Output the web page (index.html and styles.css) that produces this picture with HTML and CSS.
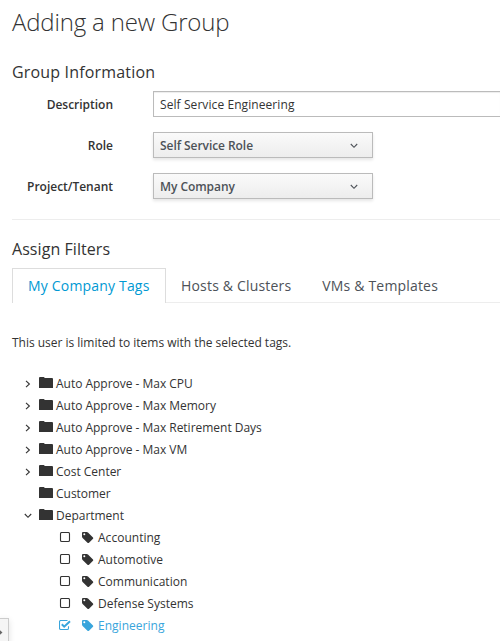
FILE: index.html
```html
<!DOCTYPE html>
<html lang="en">
<head>
<meta charset="utf-8">
<title>Adding a new Group</title>
<link rel="stylesheet" href="styles.css">
</head>
<body>
<svg class="defs" width="0" height="0" aria-hidden="true">
  <symbol id="folder" viewBox="0 0 14 12"><path d="M0 1Q0 0 1 0H4.6Q5.6 0 5.6 1H13Q14 1 14 2V11H0Z"/></symbol>
  <symbol id="tag" viewBox="0 0 12 12"><path fill-rule="evenodd" d="M0 1Q0 0 1 0H4.6Q5.4 0 6 .6L11 5.4Q11.6 6.1 11 6.8L7 10.8Q6.2 11.4 5.5 10.8L.6 5.9Q0 5.3 0 4.6ZM2.3 1.3A1 1 0 1 0 2.3 3.3A1 1 0 1 0 2.3 1.3Z"/></symbol>
  <symbol id="right" viewBox="0 0 6 8"><path class="line" d="M1 .8L4.4 4L1 7.2"/></symbol>
  <symbol id="down" viewBox="0 0 8 6"><path class="line" d="M.8 1L4 4.3L7.2 1"/></symbol>
  <symbol id="box" viewBox="0 0 12 11"><rect class="line" x="1.5" y=".5" width="9" height="9" rx="1.3"/></symbol>
  <symbol id="checked" viewBox="0 0 12 11"><path class="line" d="M9.5 6.2V8.2Q9.5 9.5 8.2 9.5H1.8Q.5 9.5 .5 8.2V1.8Q.5 .5 1.8 .5H8.5"/><path class="tick" d="M2.8 4.3L5.2 6.7L11 1.3"/></symbol>
</svg>
<main class="page">
  <h1>Adding a new Group</h1>
  <section class="info">
    <h2>Group Information</h2>
    <div class="field"><label>Description</label><div class="input">Self Service Engineering</div></div>
    <div class="field"><label>Role</label><div class="select">Self Service Role<svg class="caret"><use href="#down"/></svg></div></div>
    <div class="field"><label>Project/Tenant</label><div class="select">My Company<svg class="caret"><use href="#down"/></svg></div></div>
  </section>
  <section class="filters">
    <h2>Assign Filters</h2>
    <nav class="tabs">
      <a class="tab active">My Company Tags</a>
      <a class="tab">Hosts &amp; Clusters</a>
      <a class="tab">VMs &amp; Templates</a>
    </nav>
    <p>This user is limited to items with the selected tags.</p>
    <ul class="tree">
      <li><span class="toggle"><svg class="right"><use href="#right"/></svg></span><svg class="folder"><use href="#folder"/></svg>Auto Approve - Max CPU</li>
      <li><span class="toggle"><svg class="right"><use href="#right"/></svg></span><svg class="folder"><use href="#folder"/></svg>Auto Approve - Max Memory</li>
      <li><span class="toggle"><svg class="right"><use href="#right"/></svg></span><svg class="folder"><use href="#folder"/></svg>Auto Approve - Max Retirement Days</li>
      <li><span class="toggle"><svg class="right"><use href="#right"/></svg></span><svg class="folder"><use href="#folder"/></svg>Auto Approve - Max VM</li>
      <li><span class="toggle"><svg class="right"><use href="#right"/></svg></span><svg class="folder"><use href="#folder"/></svg>Cost Center</li>
      <li><span class="toggle"></span><svg class="folder"><use href="#folder"/></svg>Customer</li>
      <li><span class="toggle"><svg class="down"><use href="#down"/></svg></span><svg class="folder"><use href="#folder"/></svg>Department</li>
      <li class="leaf"><svg class="check"><use href="#box"/></svg><svg class="tag"><use href="#tag"/></svg>Accounting</li>
      <li class="leaf"><svg class="check"><use href="#box"/></svg><svg class="tag"><use href="#tag"/></svg>Automotive</li>
      <li class="leaf"><svg class="check"><use href="#box"/></svg><svg class="tag"><use href="#tag"/></svg>Communication</li>
      <li class="leaf"><svg class="check"><use href="#box"/></svg><svg class="tag"><use href="#tag"/></svg>Defense Systems</li>
      <li class="leaf selected"><svg class="check"><use href="#checked"/></svg><svg class="tag"><use href="#tag"/></svg>Engineering</li>
    </ul>
  </section>
</main>
<div class="handle"><svg width="5" height="7" viewBox="0 0 5 7"><path d="M0 2.5H1.5V.8L4.5 3.5L1.5 6.2V4.5H0Z"/></svg></div>
</body>
</html>
```
FILE: styles.css
```css
* { box-sizing: border-box; }
body {
  margin: 0;
  height: 641px;
  overflow: hidden;
  position: relative;
  background: #fff;
  color: #333;
  font: 12px/22px "Open Sans", sans-serif;
}
.defs { display: block; }
.page { padding-left: 12px; }
h1 { margin: 0; height: 61px; padding-top: 5px; font-size: 24px; line-height: 33px; font-weight: 300; letter-spacing: -.17px; }
h2 { margin: 0; font-size: 16px; line-height: 22px; font-weight: 400; letter-spacing: .06px; }
.info { height: 159px; border-bottom: 1px solid #ededed; }
.info h2 { margin-bottom: 8px; letter-spacing: .17px; }
.field { display: flex; height: 26px; margin-bottom: 15px; }
.field label { width: 101px; margin-right: 40px; text-align: right; font-weight: 600; line-height: 28px; letter-spacing: -.02px; }
.input, .select { border: 1px solid #bbb; padding: 0 6px; line-height: 26px; }
.input { flex: 1; border-right: 0; letter-spacing: .08px; box-shadow: inset 0 1px 1px rgba(3,3,3,.075); }
.select {
  display: flex;
  justify-content: space-between;
  width: 220px;
  padding-right: 14px;
  color: #4d5258;
  font-weight: 600;
  letter-spacing: -.06px;
  background: linear-gradient(#fafafa, #ededed);
  box-shadow: 0 2px 3px rgba(3,3,3,.1);
}
.caret { width: 8px; height: 6px; margin-top: 10px; }
svg { flex: none; fill: currentColor; }
.line { fill: none; stroke: currentColor; stroke-width: 1.1; }
.tick { fill: none; stroke: currentColor; stroke-width: 2; }
.filters { padding-top: 18px; }
.filters h2 { margin-bottom: 8px; }
.tabs { display: flex; height: 35px; border-bottom: 1px solid #ededed; font-size: 14px; letter-spacing: .18px; }
.tab { padding: 0 16px 0 15px; height: 34px; line-height: 35px; color: #4d5258; }
.tab.active { width: 154px; height: 35px; padding: 0 0 0 15px; line-height: 34px; background: #fff; border: 1px solid #ddd; border-bottom: 0; color: #0099d3; }
p { margin: 29px 0 19px; line-height: 22px; letter-spacing: -.02px; }
.tree { list-style: none; margin: 0; padding: 0; }
.tree li { display: flex; align-items: center; height: 22px; letter-spacing: -.02px; }
.toggle { display: flex; justify-content: center; width: 27px; padding-left: 5px; }
.right { width: 6px; height: 8px; }
.down { width: 8px; height: 6px; }
.folder { width: 14px; height: 12px; margin: -2px 3px 0 0; }
.tree .leaf { padding-left: 47px; letter-spacing: .02px; }
.check { width: 12px; height: 11px; margin-top: -1px; }
.tag { width: 12px; height: 12px; margin: 0 4px 0 11px; }
.selected { color: #39a5dc; }
.handle {
  position: absolute;
  left: -1px;
  top: 618px;
  display: flex;
  align-items: center;
  width: 10px;
  height: 28px;
  color: #666;
  background: #f5f5f5;
  border: 1px solid #ccc;
  box-shadow: 0 2px 6px rgba(0,0,0,.12);
}
.handle svg { margin-left: -2px; }
```
